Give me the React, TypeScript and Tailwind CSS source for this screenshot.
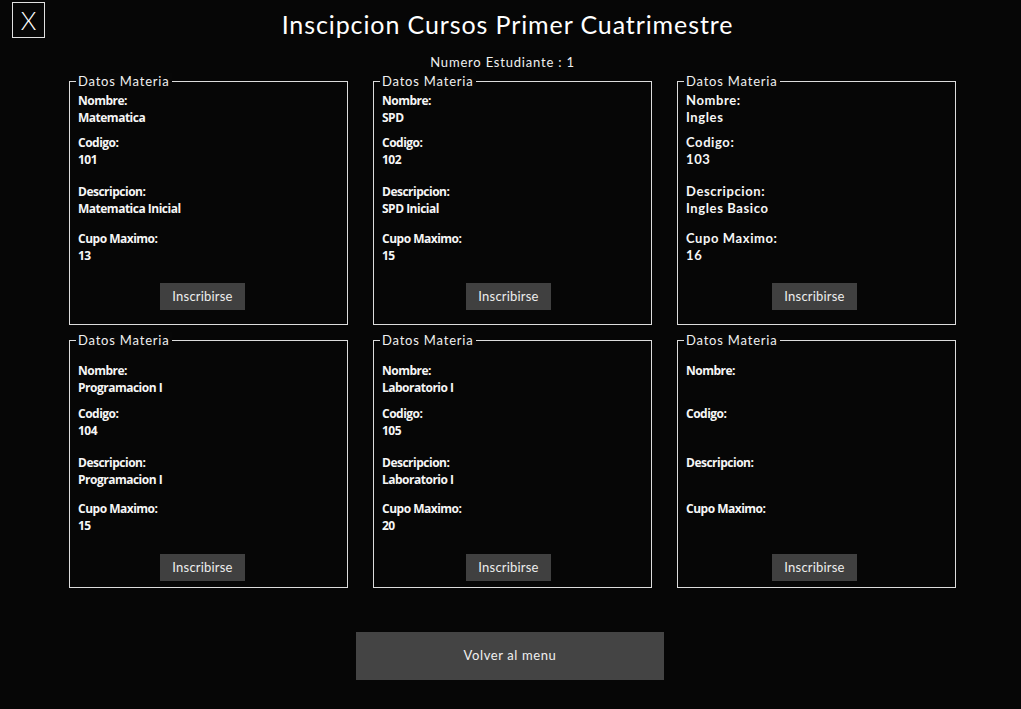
type Materia = {
  nombre: string;
  codigo: string;
  descripcion: string;
  cupo: string;
};

const titleFont = { fontFamily: "Lato, 'DejaVu Sans', sans-serif" };

function DatosMateria({
  m,
  top,
  alt,
  btnLeft,
  tall,
}: {
  m: Materia;
  top: "a" | "b";
  alt?: boolean;
  btnLeft: string;
  tall?: boolean;
}) {
  const txt = alt
    ? "font-['Lato',sans-serif] text-[13px] font-bold tracking-[0.6px]"
    : "font-['Open_Sans',sans-serif] text-[12px] font-bold tracking-[-0.5px]";
  return (
    <div
      className={`relative border border-[#dcdcdc] px-[8px] ${
        tall ? "h-[248px]" : "h-[244px]"
      } ${top === "a" ? "pt-[10px]" : "pt-[21px]"}`}
    >
      <span className="absolute -top-[9px] left-[6px] bg-[#070707] px-[2px] font-['Lato',sans-serif] text-[13px] font-normal leading-[16px] tracking-[0.8px] text-[#f0f0f0]">
        Datos Materia
      </span>
      <div className={`${txt} leading-[17px] text-[#f6f6f6]`}>
        <div>Nombre:</div>
        <div className="h-[17px]">{m.nombre}</div>
        <div className={top === "a" ? "mt-[8px]" : "mt-[9px]"}>Codigo:</div>
        <div className="h-[17px]">{m.codigo}</div>
        <div className="mt-[15px]">Descripcion:</div>
        <div className="h-[17px]">{m.descripcion}</div>
        <div className={top === "a" ? "mt-[13px]" : "mt-[12px]"}>Cupo Maximo:</div>
        <div className="h-[17px]">{m.cupo}</div>
      </div>
      <button
        className={`${top === "a" ? "mt-[19px]" : "mt-[20px]"} ${btnLeft} flex h-[27px] w-[85px] items-center justify-center bg-[#404040] font-['Lato',sans-serif] text-[13px] font-normal tracking-[0.2px] text-[#ededed]`}
      >
        Inscribirse
      </button>
    </div>
  );
}

export default function App() {
  const fila1: Materia[] = [
    { nombre: "Matematica", codigo: "101", descripcion: "Matematica Inicial", cupo: "13" },
    { nombre: "SPD", codigo: "102", descripcion: "SPD Inicial", cupo: "15" },
    { nombre: "Ingles", codigo: "103", descripcion: "Ingles Basico", cupo: "16" },
  ];
  const fila2: Materia[] = [
    { nombre: "Programacion I", codigo: "104", descripcion: "Programacion I", cupo: "15" },
    { nombre: "Laboratorio I", codigo: "105", descripcion: "Laboratorio I", cupo: "20" },
    { nombre: "", codigo: "", descripcion: "", cupo: "" },
  ];
  const lefts = ["ml-[82px]", "ml-[84px]", "ml-[86px]"];

  return (
    <div className="relative h-[709px] w-full overflow-hidden bg-[#060606] text-white">
      <button
        className="absolute left-[12px] top-[2px] flex h-[36px] w-[33px] items-center justify-center border border-[#e0e0e0] text-[25px] font-light leading-none text-white"
        style={titleFont}
      >
        X
      </button>

      <h1
        className="pr-[6px] pt-[8px] text-center text-[25px] font-normal leading-[32px] tracking-[0.9px] text-white"
        style={titleFont}
      >
        Inscipcion Cursos Primer Cuatrimestre
      </h1>
      <p
        className="mt-[14px] pr-[16px] text-center text-[13px] font-normal leading-[16px] tracking-[0.8px] text-[#f0f0f0]"
        style={titleFont}
      >
        Numero Estudiante : 1
      </p>

      <div className="ml-[69px] mt-[11px] grid w-[887px] grid-cols-3 gap-x-[25px] gap-y-[15px]">
        {fila1.map((m, i) => (
          <DatosMateria key={m.codigo} m={m} top="a" alt={i === 2} btnLeft={lefts[i]} />
        ))}
        {fila2.map((m, i) => (
          <DatosMateria key={"b" + i} m={m} top="b" btnLeft={lefts[i]} tall />
        ))}
      </div>

      <button
        className="ml-[356px] mt-[44px] flex h-[48px] w-[308px] items-center justify-center bg-[#444444] text-[13px] font-normal tracking-[0.6px] text-[#f0f0f0]"
        style={titleFont}
      >
        Volver al menu
      </button>
    </div>
  );
}
